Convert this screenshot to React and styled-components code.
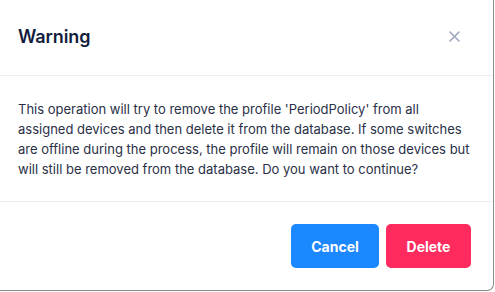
import React from "react";
import styled, { createGlobalStyle } from "styled-components";

const GlobalStyle = createGlobalStyle`
  html, body {
    margin: 0;
    padding: 0;
    background: #ffffff;
    font-family: Inter, "Noto Sans", sans-serif;
  }
`;

const Modal = styled.div`
  width: 493px;
  height: 290px;
  background: #ffffff;
  border-right: 1px solid #8c8c8c;
  border-bottom: 1px solid #8c8c8c;
  border-bottom-right-radius: 7px;
  display: flex;
  flex-direction: column;
  overflow: hidden;
`;

const Header = styled.div`
  height: 76px;
  box-sizing: border-box;
  display: flex;
  align-items: center;
  justify-content: space-between;
  padding: 0 33px 2px 18px;
  border-bottom: 1px solid #eceef2;
`;

const Title = styled.h2`
  margin: 0;
  font-size: 18px;
  font-weight: 600;
  color: #121c3d;
  letter-spacing: -0.1px;
`;

const CloseButton = styled.button`
  border: none;
  background: none;
  padding: 0;
  width: 12px;
  height: 12px;
  display: flex;
  align-items: center;
  justify-content: center;
  cursor: pointer;
  color: #9ea6bd;
`;

const Body = styled.div`
  padding: 23px 22px 22px 18px;
  border-bottom: 1px solid #eceef2;
  font-size: 13px;
  line-height: 20px;
  color: #2a3046;
`;

const Footer = styled.div`
  flex: 1;
  display: flex;
  justify-content: flex-end;
  align-items: flex-start;
  gap: 7px;
  padding: 22px 22px 0 0;
`;

const Button = styled.button`
  height: 44px;
  min-width: ${({ $w }) => $w}px;
  border: none;
  border-radius: 5px;
  background: ${({ $color }) => $color};
  color: #ffffff;
  font-family: Inter, "Noto Sans", sans-serif;
  font-size: 14px;
  font-weight: 700;
  cursor: pointer;
`;

export default function App() {
  return (
    <>
      <GlobalStyle />
      <Modal>
        <Header>
          <Title>Warning</Title>
          <CloseButton aria-label="Close">
            <svg width="11" height="11" viewBox="0 0 11 11">
              <path d="M1 1 L10 10 M10 1 L1 10" stroke="currentColor" strokeWidth="1.6" strokeLinecap="round" />
            </svg>
          </CloseButton>
        </Header>
        <Body>
          This operation will try to remove the profile 'PeriodPolicy' from all
          assigned devices and then delete it from the database. If some switches
          are offline during the process, the profile will remain on those devices
          but will still be removed from the database. Do you want to continue?
        </Body>
        <Footer>
          <Button $color="#1c88ff" $w={88}>Cancel</Button>
          <Button $color="#ff2a5d" $w={85}>Delete</Button>
        </Footer>
      </Modal>
    </>
  );
}
